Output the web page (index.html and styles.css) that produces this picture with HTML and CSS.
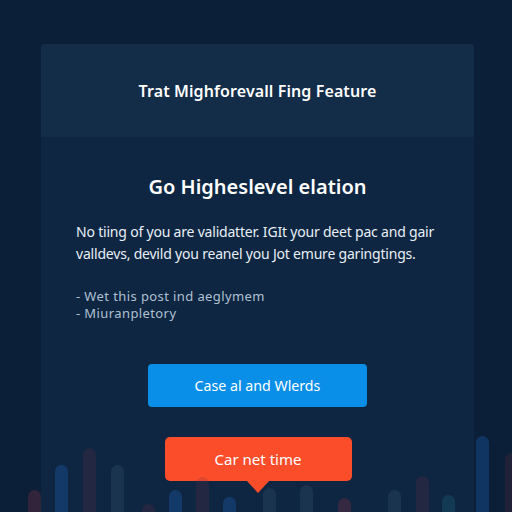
FILE: index.html
```html
<!DOCTYPE html>
<html lang="en">
<head>
<meta charset="utf-8">
<title>Feature</title>
<link rel="stylesheet" href="styles.css">
</head>
<body>
<div class="chart" aria-hidden="true">
  <span class="bar red" style="left:28px;height:22px"></span>
  <span class="bar blue" style="left:55px;height:47px"></span>
  <span class="bar red dim" style="left:83px;height:64px"></span>
  <span class="bar grey" style="left:111px;height:47px"></span>
  <span class="bar red dim" style="left:142px;height:8px"></span>
  <span class="bar blue" style="left:169px;height:22px"></span>
  <span class="bar red dim" style="left:196px;height:35px"></span>
  <span class="bar blue" style="left:223px;height:15px"></span>
  <span class="bar grey" style="left:263px;height:24px"></span>
  <span class="bar grey" style="left:300px;height:27px"></span>
  <span class="bar red" style="left:338px;height:14px"></span>
  <span class="bar grey" style="left:388px;height:22px"></span>
  <span class="bar red dim" style="left:416px;height:36px"></span>
  <span class="bar teal" style="left:442px;height:17px"></span>
  <span class="bar blue" style="left:476px;height:76px"></span>
  <span class="bar red dim" style="left:505px;height:59px"></span>
</div>
<main class="panel">
  <header class="panel-head">
    <h1 class="head-title">Trat Mighforevall Fing Feature</h1>
  </header>
  <section class="panel-body">
    <h2 class="title">Go Higheslevel elation</h2>
    <p class="lead">No tiing of you are validatter. IGIt your deet pac and gair<br>valldevs, devild you reanel you Jot emure garingtings.</p>
    <ul class="notes">
      <li>- Wet this post ind aeglymem</li>
      <li>- Miuranpletory</li>
    </ul>
    <button class="cta" type="button">Case al and Wlerds</button>
    <div class="tip">Car net time</div>
  </section>
</main>
</body>
</html>
```

FILE: styles.css
```css
* { box-sizing: border-box; }

html, body {
  margin: 0;
  height: 100%;
}

body {
  background: #0b1f38;
  font-family: "Noto Sans", "Open Sans", sans-serif;
  color: #eef3f8;
  overflow: hidden;
  position: relative;
}

.chart {
  position: absolute;
  left: 0;
  right: 0;
  bottom: 0;
  height: 90px;
  z-index: 2;
  pointer-events: none;
}

.bar {
  position: absolute;
  bottom: 0;
  width: 13px;
  border-radius: 7px 7px 0 0;
}
.bar.blue { background: rgba(30, 100, 190, 0.32); }
.bar.red { background: rgba(150, 50, 70, 0.28); }
.bar.red.dim { background: rgba(120, 45, 65, 0.2); }
.bar.grey { background: rgba(60, 90, 120, 0.26); }
.bar.teal { background: rgba(30, 110, 140, 0.28); }

.panel {
  position: relative;
  z-index: 1;
  margin: 44px 0 0 41px;
  width: 433px;
  height: 468px;
  background: #0e2641;
  border-radius: 3px 3px 0 0;
}

.panel-head {
  height: 93px;
  background: #132c47;
  border-radius: 3px 3px 0 0;
  display: flex;
  align-items: center;
  justify-content: center;
}

.head-title {
  margin: 0;
  font-size: 16px;
  font-weight: 600;
  color: #ffffff;
  letter-spacing: 0.1px;
}

.panel-body {
  display: flex;
  flex-direction: column;
  align-items: center;
  padding: 37px 35px 0;
}

.title {
  margin: 0;
  font-size: 20px;
  line-height: 26px;
  font-weight: 600;
  color: #ffffff;
}

.lead {
  align-self: stretch;
  margin: 21px 0 0;
  font-size: 14px;
  line-height: 22px;
  color: #e9eff6;
  white-space: nowrap;
  letter-spacing: -0.2px;
}

.notes {
  align-self: stretch;
  list-style: none;
  margin: 23px 0 0;
  padding: 0;
  font-size: 13px;
  line-height: 17px;
  letter-spacing: 0.4px;
  color: #b0c0d3;
}

.cta {
  margin-top: 42px;
  width: 219px;
  height: 43px;
  border: 0;
  border-radius: 4px;
  background: #0a8fe8;
  color: #ffffff;
  font-family: inherit;
  font-size: 14.2px;
}

.tip {
  position: relative;
  z-index: 3;
  margin: 30px 0 0 1px;
  width: 187px;
  height: 44px;
  border-radius: 5px;
  background: #fc4d2b;
  color: #ffffff;
  font-size: 15px;
  display: flex;
  align-items: center;
  justify-content: center;
}

.tip::after {
  content: "";
  position: absolute;
  left: 50%;
  bottom: -12px;
  margin-left: -12px;
  border-left: 12px solid transparent;
  border-right: 12px solid transparent;
  border-top: 13px solid #fc4d2b;
}
```
